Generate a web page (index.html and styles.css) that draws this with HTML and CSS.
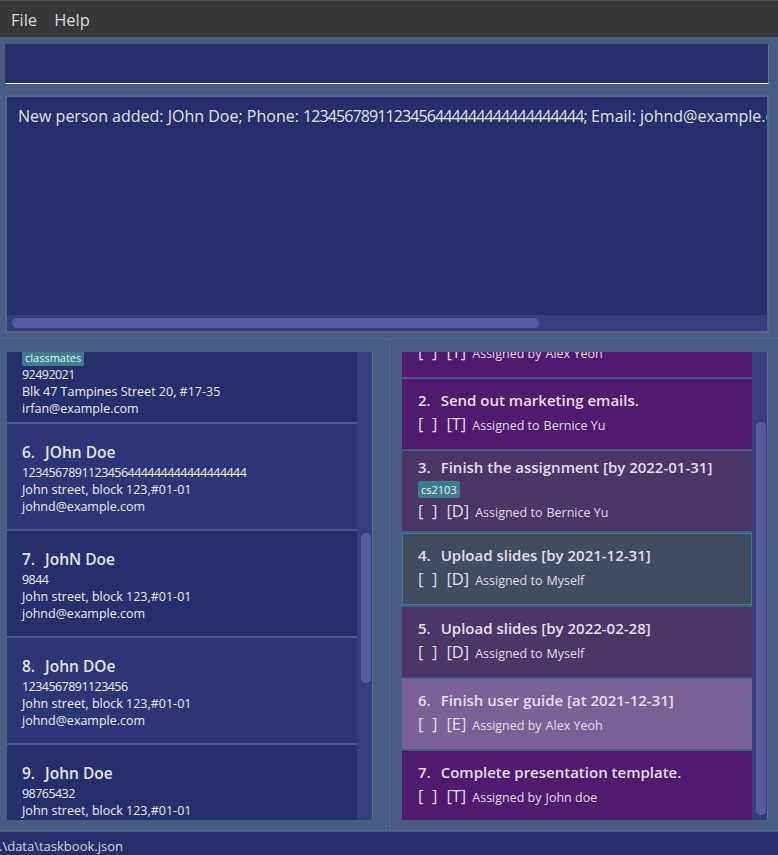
FILE: index.html
```html
<!DOCTYPE html>
<html>
<head>
<meta charset="utf-8">
<title>TaskBook</title>
<link rel="stylesheet" href="styles.css">
</head>
<body>
<div class="app">
  <div class="menubar">
    <span class="menu">File</span>
    <span class="menu">Help</span>
  </div>

  <div class="command">
    <div class="command-box"></div>
  </div>

  <div class="result">
    <div class="result-box">
      <div class="result-text">New person added: JOhn Doe; Phone: <span class="digits">1234567891123456444444444444444444;</span> Email: johnd@example.com; Address: John street, block 123,#01-01</div>
      <div class="hscroll"><div class="hthumb"></div></div>
    </div>
  </div>

  <div class="split">
    <div class="pane pane-left">
      <div class="list person-list">
        <div class="list-inner">
          <div class="pcard">
            <div class="pname"><span class="num">5.</span><span>Irfan Ibrahim</span></div>
            <div class="tags"><span class="tag">classmates</span></div>
            <div class="pdetail phone">92492021</div>
            <div class="pdetail">Blk 47 Tampines Street 20, #17-35</div>
            <div class="pdetail">irfan@example.com</div>
          </div>
          <div class="pcard alt">
            <div class="pname"><span class="num">6.</span><span>JOhn Doe</span></div>
            <div class="pdetail phone">1234567891123456444444444444444444</div>
            <div class="pdetail">John street, block 123,#01-01</div>
            <div class="pdetail">johnd@example.com</div>
          </div>
          <div class="pcard">
            <div class="pname"><span class="num">7.</span><span>JohN Doe</span></div>
            <div class="pdetail phone">9844</div>
            <div class="pdetail">John street, block 123,#01-01</div>
            <div class="pdetail">johnd@example.com</div>
          </div>
          <div class="pcard alt">
            <div class="pname"><span class="num">8.</span><span>John DOe</span></div>
            <div class="pdetail phone">1234567891123456</div>
            <div class="pdetail">John street, block 123,#01-01</div>
            <div class="pdetail">johnd@example.com</div>
          </div>
          <div class="pcard">
            <div class="pname"><span class="num">9.</span><span>John Doe</span></div>
            <div class="pdetail phone">98765432</div>
            <div class="pdetail">John street, block 123,#01-01</div>
            <div class="pdetail">johnd@example.com</div>
          </div>
        </div>
      </div>
      <div class="vscroll"><div class="vthumb thumb-left"></div></div>
    </div>

    <div class="divider"></div>

    <div class="pane pane-right">
      <div class="list task-list">
        <div class="list-inner task-inner">
          <div class="tcard todo">
            <div class="ttitle"><span class="num">1.</span><span>Buy stationery.</span></div>
            <div class="trow"><span class="br">[&nbsp;&nbsp;]</span><span class="br type">[T]</span><span class="as">Assigned by</span><span class="who">Alex Yeoh</span></div>
          </div>
          <div class="tcard todo">
            <div class="ttitle"><span class="num">2.</span><span>Send out marketing emails.</span></div>
            <div class="trow"><span class="br">[&nbsp;&nbsp;]</span><span class="br type">[T]</span><span class="as">Assigned to</span><span class="who">Bernice Yu</span></div>
          </div>
          <div class="tcard deadline">
            <div class="ttitle"><span class="num">3.</span><span>Finish the assignment [by 2022-01-31]</span></div>
            <div class="tags"><span class="tag">cs2103</span></div>
            <div class="trow"><span class="br">[&nbsp;&nbsp;]</span><span class="br type">[D]</span><span class="as">Assigned to</span><span class="who">Bernice Yu</span></div>
          </div>
          <div class="tcard selected">
            <div class="ttitle"><span class="num">4.</span><span>Upload slides [by 2021-12-31]</span></div>
            <div class="trow"><span class="br">[&nbsp;&nbsp;]</span><span class="br type">[D]</span><span class="as">Assigned to</span><span class="who">Myself</span></div>
          </div>
          <div class="tcard deadline">
            <div class="ttitle"><span class="num">5.</span><span>Upload slides [by 2022-02-28]</span></div>
            <div class="trow"><span class="br">[&nbsp;&nbsp;]</span><span class="br type">[D]</span><span class="as">Assigned to</span><span class="who">Myself</span></div>
          </div>
          <div class="tcard event">
            <div class="ttitle"><span class="num">6.</span><span>Finish user guide [at 2021-12-31]</span></div>
            <div class="trow"><span class="br">[&nbsp;&nbsp;]</span><span class="br type">[E]</span><span class="as">Assigned by</span><span class="who">Alex Yeoh</span></div>
          </div>
          <div class="tcard todo">
            <div class="ttitle"><span class="num">7.</span><span>Complete presentation template.</span></div>
            <div class="trow"><span class="br">[&nbsp;&nbsp;]</span><span class="br type">[T]</span><span class="as">Assigned by</span><span class="who">John doe</span></div>
          </div>
        </div>
      </div>
      <div class="vscroll"><div class="vthumb thumb-right"></div></div>
    </div>
  </div>

  <div class="status">.\data\taskbook.json</div>
</div>
</body>
</html>
```

FILE: styles.css
```css
* { box-sizing: border-box; }

html, body {
  margin: 0;
  padding: 0;
}

body {
  width: 778px;
  height: 855px;
  overflow: hidden;
  background: #4a5b84;
  font-family: "Open Sans", "Noto Sans", sans-serif;
  color: #e6e6e6;
}

.app {
  display: flex;
  flex-direction: column;
  height: 855px;
}

/* Menu bar */
.menubar {
  height: 37px;
  flex: none;
  background: #373737;
  border-top: 1px solid #4e4e4e;
  display: flex;
  align-items: center;
  gap: 17px;
  padding: 1px 0 0 11px;
  font-size: 16.5px;
  color: #dadada;
}

/* Command box */
.command {
  flex: none;
  padding: 7px 9px 0 5px;
}

.command-box {
  height: 40px;
  background: #252f6b;
  border-style: solid;
  border-width: 1px;
  border-color: #303241 #6a7598 #ffffff #303241;
}

/* Result display */
.result {
  flex: none;
  margin-top: 13px;
  padding: 0 11px 0 7px;
}

.result-box {
  height: 234px;
  background: #252f6b;
  display: flex;
  flex-direction: column;
  outline: 2px solid #52638e;
}

.result-text {
  flex: 1;
  padding: 9px 0 0 11px;
  white-space: nowrap;
  overflow: hidden;
  font-size: 16px;
  line-height: 20px;
  color: #e2e2e2;
}

.digits {
  letter-spacing: -0.9px;
}

.hscroll {
  height: 16px;
  flex: none;
  background: #363f7d;
  padding: 3px 0 0 5px;
}

.hthumb {
  width: 527px;
  height: 10px;
  border-radius: 5px;
  background: #545e9f;
}

/* Split area */
.split {
  flex: none;
  margin-top: 7px;
  margin-bottom: 1px;
  display: flex;
  border-top: 1px solid #56678f;
  border-bottom: 1px solid #56678f;
}

.pane {
  display: flex;
  padding-top: 13px;
  padding-bottom: 10px;
}

.pane-left {
  padding-left: 7px;
  padding-right: 12px;
}

.pane-right {
  padding-left: 12px;
  padding-right: 10px;
}

.divider {
  width: 5px;
  flex: none;
  background: #4c5d87;
  border-left: 1px solid #56678f;
  border-right: 1px solid #56678f;
}

.list {
  width: 350px;
  height: 468px;
  overflow: hidden;
  background: #485b88;
}

.task-list {
  background: #435a86;
}

.list-inner {
  display: flex;
  flex-direction: column;
  gap: 2px;
  margin-top: -35px;
}

.task-inner {
  margin-top: -45px;
}

.vscroll {
  width: 16px;
  height: 468px;
  background: #363f7d;
  border-right: 1px solid #5a6b95;
  padding-left: 4px;
}

.vthumb {
  width: 10px;
  border-radius: 5px;
  background: #545e9f;
}

.thumb-left {
  margin-top: 181px;
  height: 150px;
}

.thumb-right {
  margin-top: 70px;
  height: 393px;
}

/* Person cards */
.pcard {
  min-height: 105px;
  display: flex;
  flex-direction: column;
  justify-content: center;
  padding: 3px 0 0 15px;
  background: #252f6b;
}

.pcard.alt {
  background: #2c3676;
}

.pname {
  font-size: 15.5px;
  font-weight: 600;
  line-height: 22px;
  color: #e4e4e4;
  display: flex;
}

.num {
  margin-right: 10px;
}

.pname + .pdetail {
  margin-top: 1px;
}

.pdetail {
  font-size: 12.5px;
  line-height: 17px;
  color: #ececec;
  white-space: nowrap;
}

.pdetail.phone {
  letter-spacing: -0.55px;
}

.tags {
  display: flex;
  gap: 4px;
}

.pname + .tags {
  margin-top: 2px;
}

.tag {
  background: #3d7b91;
  color: #eeeeee;
  font-size: 11px;
  line-height: 15px;
  padding: 1px 3px;
  border-radius: 2px;
}

/* Task cards */
.tcard {
  min-height: 70px;
  display: flex;
  flex-direction: column;
  justify-content: center;
  gap: 3px;
  padding: 5px 0 8px 16px;
}

.tcard.todo { background: #511a6e; }
.tcard.deadline { background: #4b3668; }
.tcard.event { background: #7a6298; }
.tcard.selected {
  background: #414d5e;
  border: 1px solid #3b7c8d;
  min-height: 72px;
  padding-left: 15px;
}

.ttitle {
  font-size: 15px;
  font-weight: 600;
  line-height: 22px;
  color: #e4deec;
  display: flex;
  white-space: nowrap;
}

.tcard .tags {
  align-self: flex-start;
}

.trow {
  display: flex;
  align-items: baseline;
  line-height: 20px;
  color: #e2dde8;
  white-space: nowrap;
}

.br {
  font-size: 16.5px;
}

.br.type {
  margin-left: 9px;
}

.as {
  font-size: 12.5px;
  margin-left: 6px;
}

.who {
  font-size: 12.5px;
  margin-left: 4px;
}

/* Status bar */
.status {
  flex: 1;
  background: #252f6b;
  font-size: 13px;
  line-height: 23px;
  padding-top: 3px;
  text-indent: -1px;
  color: #d4d4d4;
  white-space: nowrap;
}
```
